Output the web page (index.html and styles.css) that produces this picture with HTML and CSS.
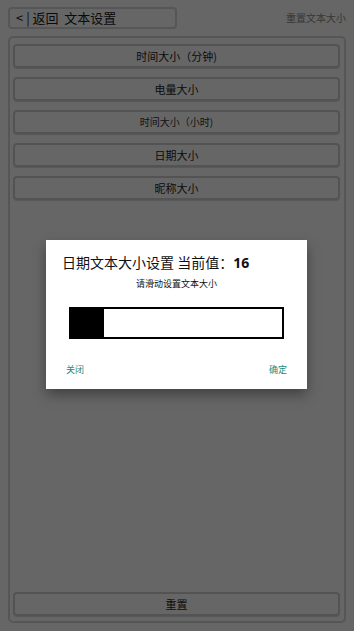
FILE: index.html
```html
<!DOCTYPE html>
<html lang="zh">
<head>
<meta charset="utf-8">
<link rel="stylesheet" href="styles.css">
</head>
<body>
<div class="page">
  <div class="topbar">
    <div class="back">&lt; | 返回&nbsp;&nbsp;文本设置</div>
    <div class="reset-link">重置文本大小</div>
  </div>
  <div class="panel">
    <div class="list">
      <div class="btn">时间大小（分钟)</div>
      <div class="btn">电量大小</div>
      <div class="btn small">时间大小（小时)</div>
      <div class="btn">日期大小</div>
      <div class="btn">昵称大小</div>
    </div>
    <div class="btn reset">重置</div>
  </div>
</div>
<div class="overlay"></div>
<div class="dialog">
  <div class="title">日期文本大小设置 当前值：<b>16</b></div>
  <div class="sub">请滑动设置文本大小</div>
  <div class="slider"><div class="fill"></div></div>
  <div class="actions"><span>关闭</span><span>确定</span></div>
</div>
</body>
</html>
```
FILE: styles.css
```css
* { box-sizing: border-box; }
html, body { margin: 0; padding: 0; }
body {
  width: 354px;
  height: 631px;
  background: #fff;
  font-family: "Noto Sans CJK SC", "Noto Sans", sans-serif;
  color: #222;
  overflow: hidden;
  position: relative;
}
.page {
  height: 631px;
  display: flex;
  flex-direction: column;
}
.topbar {
  display: flex;
  align-items: center;
  justify-content: space-between;
  padding: 7px 8px 0 8px;
}
.back {
  width: 169px;
  height: 22px;
  border: 2px solid #d6d6d6;
  border-radius: 4px;
  font-size: 13px;
  line-height: 18px;
  padding-left: 6px;
  color: #1a1a1a;
}
.reset-link {
  font-size: 10px;
  color: #8a8a8a;
  margin-top: -2px;
}
.panel {
  flex: 1;
  margin: 7px 8px 8px 8px;
  border: 2px solid #d6d6d6;
  border-radius: 5px;
  display: flex;
  flex-direction: column;
  padding: 6px 4px 5px 3px;
}
.list {
  display: flex;
  flex-direction: column;
  gap: 9px;
}
.btn {
  height: 24px;
  border: 2px solid #d0d0d0;
  border-radius: 4px;
  box-shadow: 0 1px 1px rgba(0,0,0,0.15);
  font-size: 11px;
  line-height: 20px;
  text-align: center;
  color: #222;
}
.btn.small { font-size: 10px; color: #333; }
.reset { margin-top: auto; }
.overlay {
  position: absolute;
  inset: 0;
  background: rgba(0,0,0,0.6);
}
.dialog {
  position: absolute;
  left: 46px;
  top: 240px;
  width: 261px;
  height: 149px;
  background: #fff;
  box-shadow: 0 6px 12px rgba(0,0,0,0.35);
  padding: 12px 16px 0 16px;
}
.title {
  font-size: 14px;
  line-height: 20px;
  color: #111;
}
.title b { font-weight: bold; font-family: "Noto Sans", sans-serif; }
.sub {
  font-size: 9px;
  text-align: center;
  margin-top: 4px;
  color: #111;
}
.slider {
  margin: 17px 0 0 7px;
  width: 215px;
  height: 32px;
  border: 2px solid #000;
  display: flex;
}
.fill {
  width: 33px;
  background: #000;
}
.actions {
  display: flex;
  justify-content: space-between;
  margin-top: 24px;
  padding: 0 4px;
  font-size: 9px;
  color: #1a8a7c;
}
```
